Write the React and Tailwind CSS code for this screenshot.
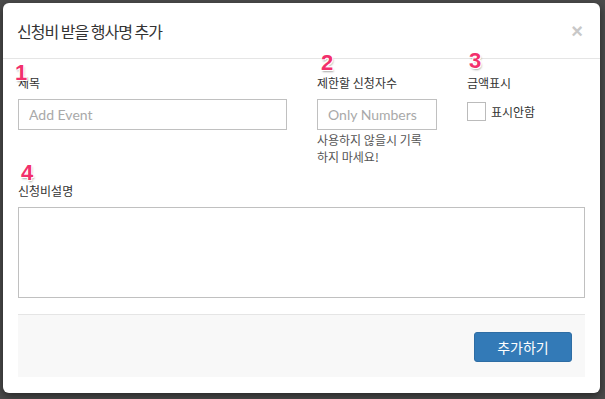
import React from 'react';

const Mark = ({ n, className }) => (
  <span
    className={`absolute font-['Liberation_Sans',sans-serif] text-[22px] font-bold leading-none text-[#f2306c] [text-shadow:-1px_-1px_0_#fff,1px_-1px_0_#fff,-1px_1px_0_#fff,1px_1px_0_#fff,1px_2px_2px_rgba(0,0,0,0.35)] ${className}`}
  >
    {n}
  </span>
);

const App = () => {
  return (
    <div className="w-[605px] h-[399px] bg-[#4b4b4b] pt-[3px] pl-[3px] overflow-hidden font-['Lato','Noto_Sans_CJK_KR',sans-serif] text-[#333]">
      <div className="relative w-[597px] h-[390px] bg-white rounded-[6px] shadow-[0_3px_9px_rgba(0,0,0,0.5)] flex flex-col">
        {/* Header */}
        <div className="h-[56px] flex items-center justify-between pl-[14px] pr-[17px] border-b border-[#e5e5e5]">
          <h4 className="text-[16px] font-['Noto_Sans_CJK_KR',sans-serif] text-[#333] tracking-[-1px]">
            신청비 받을 행사명 추가
          </h4>
          <span className="text-[20px] font-bold leading-none text-[#c8c8c8] font-['Liberation_Sans',sans-serif]">×</span>
        </div>

        {/* Body */}
        <div className="px-[15px] pt-[15px]">
          <div className="flex">
            <div className="w-[299px]">
              <label className="block text-[12px] leading-[17px] mb-[8px] font-['Noto_Sans_CJK_KR',sans-serif]">제목</label>
              <input
                type="text"
                placeholder="Add Event"
                className="w-[269px] h-[31px] border border-[#c0c0c0] px-[10px] text-[14px] placeholder:text-[#a9a9a9] outline-none"
              />
            </div>
            <div className="w-[150px]">
              <label className="block text-[12px] leading-[17px] mb-[8px] font-['Noto_Sans_CJK_KR',sans-serif]">제한할 신청자수</label>
              <input
                type="text"
                placeholder="Only Numbers"
                className="w-[120px] h-[31px] border border-[#c0c0c0] px-[10px] text-[14px] placeholder:text-[#a9a9a9] outline-none"
              />
              <p className="mt-[1px] text-[12px] leading-[17px] text-[#555] font-['Noto_Sans_CJK_KR',sans-serif]">
                사용하지 않을시 기록
                <br />
                하지 마세요!
              </p>
            </div>
            <div>
              <label className="block text-[12px] leading-[17px] mb-[11px] font-['Noto_Sans_CJK_KR',sans-serif]">금액표시</label>
              <div className="flex items-center gap-[5px]">
                <span className="w-[19px] h-[19px] border border-[#bbb] bg-white" />
                <span className="text-[12px] leading-[17px] font-['Noto_Sans_CJK_KR',sans-serif]">표시안함</span>
              </div>
            </div>
          </div>

          <div className="mt-[17px]">
            <label className="block text-[12px] leading-[17px] mb-[8px] font-['Noto_Sans_CJK_KR',sans-serif]">신청비설명</label>
            <textarea className="block w-[567px] h-[91px] border border-[#c0c0c0] resize-none outline-none" />
          </div>

          {/* Footer */}
          <div className="mt-[16px] h-[63px] bg-[#f8f8f8] border-t border-[#e5e5e5] flex justify-end pt-[17px] pr-[13px]">
            <button className="w-[98px] h-[30px] bg-[#337ab7] border border-[#2e6da4] rounded-[3px] text-white text-[14px] font-['Noto_Sans_CJK_KR',sans-serif]">
              추가하기
            </button>
          </div>
        </div>

        <Mark n="1" className="left-[12px] top-[59px]" />
        <Mark n="2" className="left-[318px] top-[49px]" />
        <Mark n="3" className="left-[466px] top-[47px]" />
        <Mark n="4" className="left-[18px] top-[159px]" />
      </div>
    </div>
  );
};

export default App;
